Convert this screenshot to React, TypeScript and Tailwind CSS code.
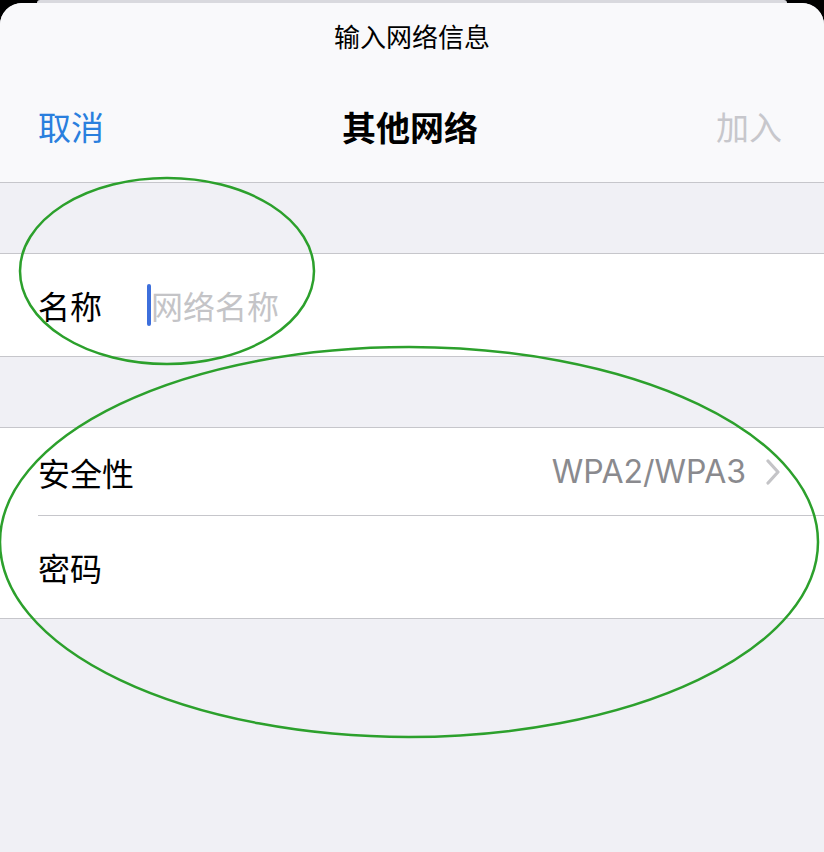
const cjk = "font-['Noto_Sans_CJK_SC',sans-serif]";

const Gap = ({ h }: { h: string }) => <div className={`${h} bg-[#f0f0f5]`} />;

export default function App() {
  return (
    <div className={`relative h-[852px] w-[824px] overflow-hidden bg-black ${cjk}`}>
      {/* sheet behind */}
      <div className="mx-[37px] h-[3px] rounded-t-md bg-[#d9d9de]" />

      <div className="flex h-[849px] flex-col overflow-hidden rounded-t-[22px] bg-[#f0f0f5]">
        {/* header */}
        <header className="flex h-[180px] flex-col border-b border-[#c6c6cb] bg-[#f9f9fb]">
          <div className="pt-[16px] text-center text-[26px] leading-[34px] text-black">输入网络信息</div>
          <div className="flex flex-1 items-center justify-between pt-[18px] pr-[42px] pl-[38px]">
            <button className="text-[33px] leading-none text-[#2a7fde]">取消</button>
            <h1 className="text-[34px] leading-none font-bold text-black">其他网络</h1>
            <button className="text-[33px] leading-none text-[#c7c7cc]">加入</button>
          </div>
        </header>

        <Gap h="h-[70px]" />

        {/* name */}
        <div className="flex h-[104px] items-center border-y border-[#c6c6cb] bg-white pl-[38px]">
          <span className="w-[109px] text-[32px] text-black">名称</span>
          <span className="h-[42px] w-[4px] rounded-full bg-[#3d6fdc]" />
          <span className="text-[32px] text-[#c4c4c7]">网络名称</span>
        </div>

        <Gap h="h-[70px]" />

        {/* security + password */}
        <div className="border-y border-[#c6c6cb] bg-white pl-[38px]">
          <div className="flex h-[88px] items-center border-b border-[#c6c6cb] pr-[44px]">
            <span className="flex-1 text-[32px] text-black">安全性</span>
            <span className="font-['Inter',sans-serif] text-[32px] text-[#8a8a8e]">WPA2/WPA3</span>
            <svg className="ml-[20px]" width="14" height="26" viewBox="0 0 14 26" fill="none">
              <path d="M2 2l10 11L2 24" stroke="#c4c4c7" strokeWidth="3.2" strokeLinecap="round" strokeLinejoin="round" />
            </svg>
          </div>
          <div className="flex h-[102px] items-center">
            <span className="text-[32px] text-black">密码</span>
          </div>
        </div>
      </div>

      {/* hand-drawn marks */}
      <svg className="pointer-events-none absolute inset-0" width="824" height="852">
        <ellipse cx="167" cy="271" rx="147" ry="93" fill="none" stroke="#2ca02c" strokeWidth="2.5" />
        <ellipse cx="409" cy="542" rx="409" ry="195" fill="none" stroke="#2ca02c" strokeWidth="2.5" />
      </svg>
    </div>
  );
}
